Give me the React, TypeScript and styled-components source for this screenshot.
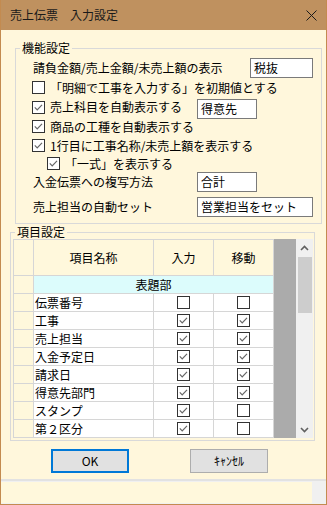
import React from "react";
import styled, { createGlobalStyle } from "styled-components";

const GlobalStyle = createGlobalStyle`
  body {
    margin: 0;
    font-family: "Noto Sans CJK JP", sans-serif;
  }
`;

const Window = styled.div`
  width: 327px;
  height: 505px;
  box-sizing: border-box;
  border: 1px solid #c38b50;
  border-top: none;
  background: #fff7dc;
  display: flex;
  flex-direction: column;
  font-family: "Noto Sans CJK JP", sans-serif;
  font-size: 12px;
  line-height: 14px;
  color: #000;
`;

const TitleBar = styled.div`
  height: 30px;
  flex: none;
  background: #bf915f;
  display: flex;
  align-items: center;
  justify-content: space-between;
  padding: 0 9px 0 9px;
  color: #1a1a1a;
`;

const Frame = styled.fieldset<{ $mt: number; $ml: number; $w: number; $pb: number }>`
  margin: ${(p) => p.$mt}px 0 0 ${(p) => p.$ml}px;
  width: ${(p) => p.$w}px;
  box-sizing: border-box;
  padding: 0 0 ${(p) => p.$pb}px 0;
  border: 1px solid #d9d9d9;
  min-inline-size: 0;
`;

const Legend = styled.legend`
  margin-left: 4px;
  padding: 0 2px;
  line-height: 14px;
  height: 14px;
`;

const Row = styled.div<{ $h: number; $pl: number; $mt?: number }>`
  display: flex;
  align-items: center;
  height: ${(p) => p.$h}px;
  padding-left: ${(p) => p.$pl}px;
  margin-top: ${(p) => p.$mt ?? 0}px;
  white-space: nowrap;
`;

const Label = styled.span<{ $w?: number }>`
  display: flex;
  align-items: center;
  width: ${(p) => (p.$w ? `${p.$w}px` : "auto")};
  flex: none;
`;

const Box = styled.span`
  display: inline-flex;
  margin-right: 5px;
`;

const Field = styled.div<{ $w: number; $mt?: number }>`
  width: ${(p) => p.$w}px;
  height: 20px;
  margin-top: ${(p) => p.$mt ?? 0}px;
  box-sizing: border-box;
  border: 1px solid #7a7a7a;
  background: #fff;
  padding-left: 3px;
  display: flex;
  align-items: center;
  flex: none;
`;

const GridWrap = styled.div`
  display: flex;
  margin-left: 2px;
  width: 300px;
  height: 199px;
`;

const Table = styled.div`
  display: grid;
  grid-template-columns: 19px 119px 59px 59px;
  grid-auto-rows: 17px;
  grid-template-rows: 35px;
  gap: 1px;
  padding: 1px;
  background: #d6d6d6;
  width: 261px;
  box-sizing: border-box;
  height: 199px;
`;

const Cell = styled.div<{ $bg?: string; $align?: string; $span?: number }>`
  background: ${(p) => p.$bg ?? "#fff"};
  display: flex;
  align-items: center;
  justify-content: ${(p) => p.$align ?? "center"};
  padding-left: ${(p) => (p.$align === "flex-start" ? "1px" : "0")};
  grid-column: ${(p) => (p.$span ? `span ${p.$span}` : "auto")};
  white-space: nowrap;
`;

const Filler = styled.div`
  width: 22px;
  background: #ababab;
`;

const ScrollBar = styled.div`
  width: 17px;
  background: #f0f0f0;
  display: flex;
  flex-direction: column;
`;

const Arrow = styled.div`
  height: 17px;
  display: flex;
  align-items: center;
  justify-content: center;
  flex: none;
`;

const Thumb = styled.div`
  height: 56px;
  margin: 1px 1px 0 2px;
  background: #cdcdcd;
`;

const Track = styled.div`
  flex: 1;
`;

const Buttons = styled.div`
  display: flex;
  gap: 61px;
  padding-left: 50px;
  margin-top: 8px;
`;

const Button = styled.div<{ $primary?: boolean }>`
  width: 78px;
  height: 24px;
  box-sizing: border-box;
  background: #e1e1e1;
  border: ${(p) => (p.$primary ? "2px solid #0078d7" : "1px solid #adadad")};
  display: flex;
  align-items: center;
  justify-content: center;
  font-size: 12px;
`;

const StatusBar = styled.div`
  margin-top: auto;
  height: 23px;
  border-top: 2px solid #e2e2e2;
  background: #f0f0f0;
  display: flex;
  flex: none;
`;

const StatusPanel = styled.div`
  width: 311px;
  margin: 1px 0 1px 0;
  background: #fff8dc;
`;

const Check = ({ on }: { on: boolean }) => (
  <svg width="13" height="13" viewBox="0 0 13 13">
    <rect x="0.5" y="0.5" width="12" height="12" fill="#fff" stroke="#333" />
    {on && (
      <path d="M2.8 6.4 L5.2 8.8 L10 3.8" fill="none" stroke="#666" strokeWidth="1.2" />
    )}
  </svg>
);

const CloseIcon = () => (
  <svg width="11" height="11" viewBox="0 0 11 11">
    <path d="M0.5 0.5 L10.5 10.5 M10.5 0.5 L0.5 10.5" stroke="#1a1a1a" strokeWidth="1" />
  </svg>
);

const Chevron = ({ up }: { up: boolean }) => (
  <svg width="9" height="6" viewBox="0 0 9 6">
    <path
      d={up ? "M1 5 L4.5 1.5 L8 5" : "M1 1 L4.5 4.5 L8 1"}
      fill="none"
      stroke="#606060"
      strokeWidth="1.6"
    />
  </svg>
);

const items: [string, boolean, boolean][] = [
  ["伝票番号", false, false],
  ["工事", true, true],
  ["売上担当", true, true],
  ["入金予定日", true, true],
  ["請求日", true, true],
  ["得意先部門", true, true],
  ["スタンプ", true, false],
  ["第２区分", true, false],
];

const CREAM = "#fff8dc";

export default function App() {
  return (
    <>
      <GlobalStyle />
      <Window>
        <TitleBar>
          <span>売上伝票　入力設定</span>
          <CloseIcon />
        </TitleBar>

        <Frame $mt={11} $ml={14} $w={307} $pb={6}>
          <Legend>機能設定</Legend>
          <Row $h={20} $pl={17} $mt={3}>
            <Label $w={217}>請負金額/売上金額/未売上額の表示</Label>
            <Field $w={63}>税抜</Field>
          </Row>
          <Row $h={19} $pl={16}>
            <Box><Check on={false} /></Box>
            「明細で工事を入力する」を初期値とする
          </Row>
          <Row $h={20} $pl={16}>
            <Label $w={165}>
              <Box><Check on /></Box>
              売上科目を自動表示する
            </Label>
            <Field $w={60} $mt={4}>得意先</Field>
          </Row>
          <Row $h={19} $pl={16}>
            <Box><Check on /></Box>
            商品の工種を自動表示する
          </Row>
          <Row $h={19} $pl={16}>
            <Box><Check on /></Box>
            1行目に工事名称/未売上額を表示する
          </Row>
          <Row $h={17} $pl={31}>
            <Box><Check on /></Box>
            「一式」を表示する
          </Row>
          <Row $h={20} $pl={17}>
            <Label $w={164}>入金伝票への複写方法</Label>
            <Field $w={60}>合計</Field>
          </Row>
          <Row $h={20} $pl={17} $mt={5}>
            <Label $w={164}>売上担当の自動セット</Label>
            <Field $w={116}>営業担当をセット</Field>
          </Row>
        </Frame>

        <Frame $mt={1} $ml={9} $w={305} $pb={2}>
          <Legend>項目設定</Legend>
          <GridWrap>
            <Table>
              <Cell $bg={CREAM} />
              <Cell $bg={CREAM}>項目名称</Cell>
              <Cell $bg={CREAM}>入力</Cell>
              <Cell $bg={CREAM}>移動</Cell>
              <Cell $bg={CREAM} />
              <Cell $bg="#dcfcfc" $span={3}>表題部</Cell>
              {items.map(([name, input, move]) => (
                <React.Fragment key={name}>
                  <Cell $bg={CREAM} />
                  <Cell $align="flex-start">{name}</Cell>
                  <Cell><Check on={input} /></Cell>
                  <Cell><Check on={move} /></Cell>
                </React.Fragment>
              ))}
            </Table>
            <Filler />
            <ScrollBar>
              <Arrow><Chevron up /></Arrow>
              <Thumb />
              <Track />
              <Arrow><Chevron up={false} /></Arrow>
            </ScrollBar>
          </GridWrap>
        </Frame>

        <Buttons>
          <Button $primary>OK</Button>
          <Button>ｷｬﾝｾﾙ</Button>
        </Buttons>

        <StatusBar>
          <StatusPanel />
        </StatusBar>
      </Window>
    </>
  );
}
